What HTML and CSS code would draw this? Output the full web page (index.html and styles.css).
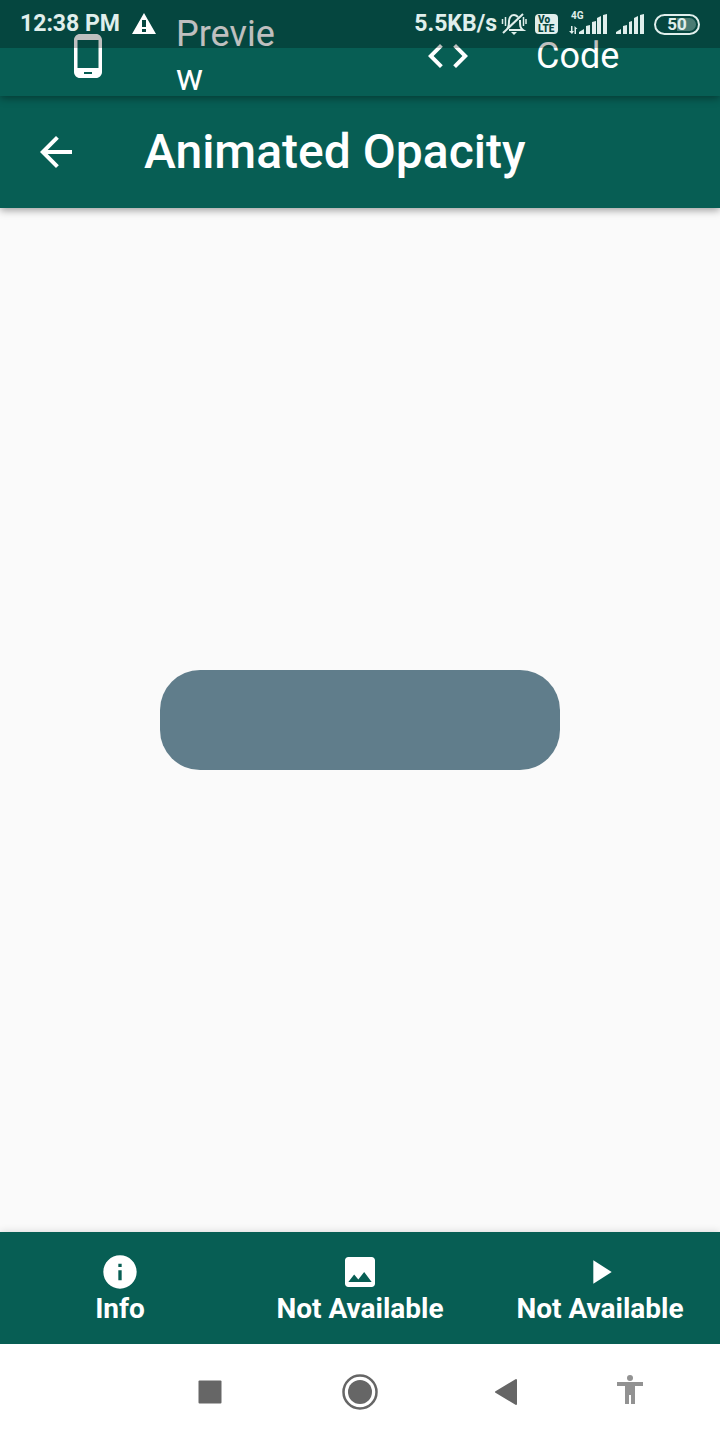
FILE: index.html
```html
<!DOCTYPE html>
<html lang="en">
<head>
<meta charset="utf-8">
<meta name="viewport" content="width=device-width, initial-scale=1">
<title>Animated Opacity</title>
<link rel="stylesheet" href="styles.css">
</head>
<body>
<div class="screen">
  <div class="status">
    <span class="clock">12:38 PM</span>
    <svg class="warning" width="24" height="22" viewBox="0 0 24 22"><path fill="#fff" fill-rule="evenodd" d="M12 0 24 21H0zM10 7v7h4V7zm0 9v3h4v-3z"/></svg>
    <span class="speed">5.5KB/s</span>
    <svg class="muted" width="26" height="24" viewBox="0 0 26 24" fill="none" stroke="#e0efec" stroke-width="2"><path d="M6 17c2-2 2-4 2-8 0-3 2-6 5-6 2 0 3 1 4 2M19 8c0 6 0 8 3 10H8M2 21 22 2"/><path d="M1.500 7v5M4.500 5v9M22.500 5v9M25 7v5" stroke-width="1.500"/><path d="M10 20h6l-3 3z" fill="#e0efec" stroke="none"/></svg>
    <span class="volte"><span>Vo</span><span>LTE</span></span>
    <span class="mobile">
      <span class="network">4G</span>
      <svg width="38" height="20" viewBox="0 0 38 20" fill="#e0efec"><path d="M2 12h1.500v5H5l-2 3-3-3h2zM5.500 20v-8l3 3H7v5zM10 20v-2l5-3v5zM17 12l4-1v9h-4zM23 8l4-1v13h-4zM28 4l4-2v18h-4zM34 1l4-1v20h-4z"/></svg>
    </span>
    <svg class="signal" width="28" height="20" viewBox="0 0 28 20" fill="#e0efec"><path d="M0 20v-2l5-3v5zM7 12l4-1v9H7zM13 8l3-1v13h-3zM18 4l4-2v18h-4zM24 1l4-1v20h-4z"/></svg>
    <span class="battery"><span>50</span></span>
  </div>

  <nav class="tabs">
    <button class="tab" type="button">
      <svg width="48" height="48" viewBox="0 0 24 24" fill="#fff"><path fill-rule="evenodd" d="M16 1H8C6.340 1 5 2.340 5 4v16c0 1.660 1.340 3 3 3h8c1.660 0 3-1.340 3-3V4c0-1.660-1.340-3-3-3zm-2 20h-4v-1h4v1zm3.250-3H6.750V4h10.500v14z"/></svg>
      <span class="tab-label">Preview</span>
    </button>
    <button class="tab" type="button">
      <svg width="48" height="48" viewBox="0 0 24 24" fill="#fff"><path d="M9.400 16.600 4.800 12l4.600-4.600L8 6l-6 6 6 6 1.400-1.400zm5.200 0 4.600-4.600-4.600-4.600L16 6l6 6-6 6-1.400-1.400z"/></svg>
      <span class="tab-label">Code</span>
    </button>
  </nav>

  <header class="appbar">
    <button class="back" type="button" aria-label="Back">
      <svg width="48" height="48" viewBox="0 0 24 24" fill="#fff"><path d="M20 11H7.830l5.590-5.590L12 4l-8 8 8 8 1.410-1.410L7.830 13H20v-2z"/></svg>
    </button>
    <h1 class="title">Animated Opacity</h1>
  </header>

  <main class="content">
    <div class="box"></div>
  </main>

  <nav class="actions">
    <button class="action" type="button">
      <svg width="40" height="40" viewBox="0 0 24 24" fill="#fff"><path d="M12 2C6.480 2 2 6.480 2 12s4.480 10 10 10 10-4.480 10-10S17.520 2 12 2zm1 15h-2v-6h2v6zm0-8h-2V7h2v2z"/></svg>
      <span>Info</span>
    </button>
    <button class="action" type="button">
      <svg width="40" height="40" viewBox="0 0 24 24" fill="#fff"><path d="M21 19V5c0-1.100-.9-2-2-2H5c-1.100 0-2 .9-2 2v14c0 1.100.9 2 2 2h14c1.100 0 2-.9 2-2zM8.500 13.500l2.500 3.010L14.500 12l4.500 6H5l3.500-4.500z"/></svg>
      <span>Not Available</span>
    </button>
    <button class="action" type="button">
      <svg width="40" height="40" viewBox="0 0 24 24" fill="#fff"><path d="M8 5v14l11-7z"/></svg>
      <span>Not Available</span>
    </button>
  </nav>

  <nav class="system">
    <span></span>
    <button type="button" aria-label="Recent apps"><svg width="24" height="24" viewBox="0 0 24 24"><rect x=".5" y=".5" width="23" height="23" rx="1" fill="#666"/></svg></button>
    <button type="button" aria-label="Home"><svg width="36" height="36" viewBox="0 0 36 36"><circle cx="18" cy="18" r="16.500" fill="none" stroke="#666" stroke-width="2.500"/><circle cx="18" cy="18" r="12" fill="#666"/></svg></button>
    <button type="button" aria-label="Back"><svg width="24" height="28" viewBox="0 0 24 28"><path d="M2 14 22 2v24z" fill="#666" stroke="#666" stroke-width="2" stroke-linejoin="round"/></svg></button>
    <button type="button" aria-label="Accessibility"><svg width="28" height="36" viewBox="0 0 28 36" fill="#929292"><circle cx="14" cy="4" r="3"/><path d="M1 8h26v4h-8v18h-4v-9h-2v9H9V12H1z"/></svg></button>
    <span></span>
  </nav>
</div>
</body>
</html>
```
FILE: styles.css
```css
* {
  box-sizing: border-box;
}

body {
  margin: 0;
  font-family: Roboto, "Liberation Sans", sans-serif;
  background: #fafafa;
}

button {
  padding: 0;
  border: 0;
  background: none;
  color: inherit;
  font: inherit;
}

svg {
  display: block;
  flex: none;
}

.screen {
  position: relative;
  display: flex;
  flex-direction: column;
  min-height: 100vh;
}

.status {
  position: absolute;
  z-index: 4;
  top: 0;
  left: 0;
  right: 0;
  display: flex;
  align-items: center;
  height: 48px;
  padding: 0 20px;
  background: rgba(0, 0, 0, 0.25);
  color: #e0efec;
  font-size: 23px;
  font-weight: 700;
  line-height: 28px;
}

.warning {
  margin-left: 12px;
}

.speed {
  margin-left: auto;
}

.muted {
  margin-left: 4px;
}

.volte {
  display: flex;
  flex-direction: column;
  width: 23px;
  height: 20px;
  margin-left: 8px;
  padding: 1px 3px;
  border-radius: 4px;
  background: #e0efec;
  color: #07463f;
  font-size: 10px;
  font-weight: 900;
  line-height: 9px;
}

.mobile {
  display: grid;
  margin-left: 11px;
}

.mobile > * {
  grid-area: 1 / 1;
}

.network {
  padding-left: 2px;
  font-size: 10px;
  font-weight: 700;
  line-height: 4px;
}

.signal {
  margin-left: 9px;
}

.battery {
  display: flex;
  width: 46px;
  height: 21px;
  margin-left: 10px;
  padding: 2px;
  border: 2px solid #e0efec;
  border-radius: 11px;
}

.battery span {
  flex: 1;
  border-radius: 8px;
  background: linear-gradient(to right, transparent 50%, #4a7b73 50%);
  font-size: 17px;
  font-weight: 700;
  line-height: 13px;
  text-align: center;
}

.tabs {
  position: relative;
  z-index: 3;
  display: grid;
  grid-template-columns: 1fr 1fr;
  height: 96px;
  padding-top: 16px;
  background: #075e54;
  color: #fff;
  box-shadow: 0 2px 8px rgba(0, 0, 0, 0.4);
}

.tab {
  display: flex;
  align-items: center;
  gap: 64px;
  min-width: 0;
  height: 80px;
  padding: 0 64px;
  font-size: 36px;
  line-height: 44px;
  text-align: left;
}

.tab-label {
  min-width: 0;
  overflow-wrap: anywhere;
}

.appbar {
  position: relative;
  z-index: 2;
  display: flex;
  align-items: center;
  gap: 64px;
  height: 112px;
  padding: 0 32px;
  background: #075e54;
  color: #fff;
  box-shadow: 0 2px 8px rgba(0, 0, 0, 0.4);
}

.title {
  margin: 0;
  font-size: 48px;
  font-weight: 500;
  line-height: 56px;
}

.content {
  display: flex;
  flex: 1;
  align-items: center;
  justify-content: center;
}

.box {
  width: 400px;
  height: 100px;
  border-radius: 40px;
  background: #607d8b;
}

.actions {
  display: grid;
  grid-template-columns: repeat(3, 1fr);
  height: 112px;
  background: #075e54;
  color: #fff;
  box-shadow: 0 0 8px rgba(0, 0, 0, 0.15);
}

.action {
  display: flex;
  flex-direction: column;
  align-items: center;
  padding-top: 20px;
  font-size: 28px;
  font-weight: 700;
  line-height: 34px;
}

.system {
  position: relative;
  display: grid;
  grid-template-columns: 135fr 150fr 150fr 142fr 106fr 37fr;
  height: 96px;
  background: #fff;
}

.system button {
  display: grid;
  place-items: center;
}
```
